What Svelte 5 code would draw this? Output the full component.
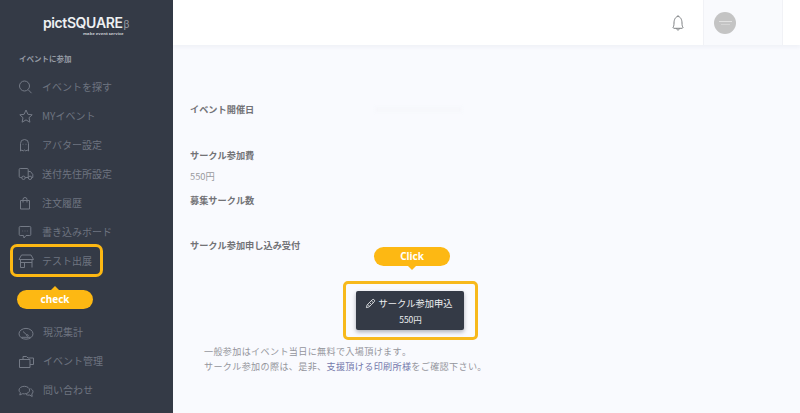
<script>
  const iconPaths = {
    search: '<circle cx="6.500" cy="7" r="5"/><path d="M10.200 10.700 13.500 14.200"/>',
    star: '<path d="M8 2 9.900 6.300 14.200 6.800 11 9.700 11.900 14.200 8 11.900 4.100 14.200 5 9.700 1.800 6.800 6.100 6.300z"/>',
    ghost: '<path d="M2.500 14V6.500a4 4 0 0 1 8 0V14l-1.300-1-1.300 1-1.400-1-1.300 1-1.300-1z"/><path d="M5 6.800v.8M8 6.800v.8"/>',
    truck: '<path d="M3.800 11.500H2.200a1 1 0 0 1-1-1v-7a1 1 0 0 1 1-1h7a1 1 0 0 1 1 1v8H7.200M10.200 5.500h2.300l2.300 3v3h-1"/><circle cx="5.500" cy="11.800" r="1.700"/><circle cx="12" cy="11.800" r="1.700"/>',
    bag: '<path d="M2.500 5.500h9v8.500h-9z"/><path d="M5 7.500v-3a2 2 0 0 1 4 0v3"/>',
    chat: '<path d="M2.200 2.500h9.600a1 1 0 0 1 1 1v7a1 1 0 0 1-1 1H8L6 14l-.5-2.500H2.200a1 1 0 0 1-1-1v-7a1 1 0 0 1 1-1z"/><path d="M4.500 7h.6M6.700 7h.6M8.900 7h.6"/>',
    shop: '<path d="M3.500 2h9.500l2.500 4.500H1zM2.500 6.500v8M14 6.500v8M2.500 9.500H14M6.500 14.500v-5M2.500 14.500h4"/>',
    gauge: '<ellipse cx="8" cy="9.800" rx="7" ry="5.400"/><path d="M3.500 13.300h9M5 7.500 9 11.200"/><circle cx="9.500" cy="11.500" r=".8"/>',
    folder: '<path d="M5 6.500v-3h3.500l1.500 1.500h5.500v6.500h-3.500"/><path d="M1.500 6.500h10.500v8H1.500z"/>',
    talk: '<path d="M6.300 4.300c-2.900 0-5.300 1.700-5.300 3.800 0 1 .5 1.900 1.400 2.600L1.800 13l2.700-1.300c.6.100 1.200.2 1.800.2 2.900 0 5.300-1.700 5.300-3.800s-2.400-3.800-5.300-3.800z"/><path d="M12.500 6.700c1.500.6 2.500 1.700 2.500 3 0 .9-.5 1.700-1.200 2.300l.4 2.500-2.500-1.400c-1.300.2-2.800 0-3.700-.6"/>'
  };
  const topItems = [
    ['search', 'イベントを探す'], ['star', 'MYイベント'], ['ghost', 'アバター設定'],
    ['truck', '送付先住所設定'], ['bag', '注文履歴'], ['chat', '書き込みボード']
  ];
  const bottomItems = [['gauge', '現況集計'], ['folder', 'イベント管理'], ['talk', '問い合わせ']];
</script>

<div class="page">
  <aside class="sidebar">
    <div class="logo">
      <div class="logo-main">pictSQUARE<span class="beta">β</span></div>
      <div class="logo-sub">make event service</div>
    </div>
    <div class="section">イベントに参加</div>
    <nav>
      {#each topItems as [icon, label]}
        <div class="item">
          <svg viewBox="0 0 16 16" class="icon">{@html iconPaths[icon]}</svg>
          <span>{label}</span>
        </div>
      {/each}
      <div class="item marked">
        <svg viewBox="0 0 16 16" class="icon">{@html iconPaths.shop}</svg>
        <span>テスト出展</span>
      </div>
      <div class="check-row"><div class="bubble check">check</div></div>
      {#each bottomItems as [icon, label]}
        <div class="item lower">
          <svg viewBox="0 0 16 16" class="icon">{@html iconPaths[icon]}</svg>
          <span>{label}</span>
        </div>
      {/each}
    </nav>
  </aside>

  <div class="main">
    <header>
      <svg class="bell" viewBox="0 0 16 18">
        <path d="M8 1.200v1.300M3 13.500c.6-1 1-2 1-4.500 0-3.500 1.700-6.500 4-6.500s4 3 4 6.500c0 2.500.4 3.500 1 4.500-.2.500-.5.700-1 .8H4c-.5-.100-.8-.3-1-.8zM6.500 14.500c.2 1 .8 1.500 1.500 1.500s1.300-.5 1.500-1.500"/>
      </svg>
      <div class="user">
        <div class="avatar"><i></i><i class="short"></i></div>
      </div>
    </header>
    <main>
      <div class="first-row">
        <h3>イベント開催日</h3>
        <div class="smudge"></div>
      </div>
      <h3 class="fee">サークル参加費</h3>
      <p class="price">550円</p>
      <h3 class="count">募集サークル数</h3>
      <h3 class="accept">サークル参加申し込み受付</h3>
      <div class="cta">
        <div class="bubble click">Click</div>
        <div class="frame">
          <button>
            <span class="btn-title">
              <svg viewBox="0 0 12 12" class="pen"><path d="M1.500 10.500 2.300 7.500 7.800 2a1.500 1.500 0 0 1 2.200 2.200L4.500 9.700zM7 3l2 2M3 7l2 2M5 5l1.500 1.500"/></svg>
              サークル参加申込
            </span>
            <span class="btn-price">550円</span>
          </button>
        </div>
      </div>
      <div class="note">
        <p>一般参加はイベント当日に無料で入場頂けます。</p>
        <p>サークル参加の際は、是非、<span class="link">支援頂ける印刷所様</span>をご確認下さい。</p>
      </div>
    </main>
  </div>
</div>

<style>
  :global(body) { margin: 0; }
  .page {
    display: flex;
    width: 800px;
    height: 413px;
    overflow: hidden;
    font-family: "Noto Sans CJK JP", "Noto Sans", sans-serif;
    font-kerning: none;
    font-feature-settings: "kern" 0, "palt" 0;
    background: #f9fafe;
  }
  .sidebar {
    flex: 0 0 173px;
    background: #343a46;
    color: #7f8590;
    box-sizing: border-box;
    padding-top: 15px;
  }
  .logo { height: 37px; padding-left: 43px; color: #eef0f2; }
  .logo-main {
    font-family: Inter, sans-serif;
    font-size: 14px;
    line-height: 16px;
    font-weight: 600;
    letter-spacing: -0.4px;
    white-space: nowrap;
  }
  .beta { font-size: 10px; color: #9a9fa8; margin-left: 1px; font-weight: 400; }
  .logo-sub {
    font-family: "Open Sans", sans-serif;
    font-size: 4.200px;
    line-height: 5px;
    margin: -1px 0 0 40px;
    font-weight: 700;
    color: #c8cbd0;
    white-space: nowrap;
  }
  .section {
    font-size: 7.500px;
    line-height: 14px;
    font-weight: 700;
    padding-left: 19px;
    color: #979ca5;
    height: 20px;
  }
  .item {
    height: 29px;
    display: flex;
    align-items: center;
    padding-left: 18px;
    font-size: 10px;
    color: #6e7480;
  }
  .icon {
    width: 16px;
    height: 16px;
    margin-right: 8px;
    fill: none;
    stroke: #747a86;
    stroke-width: 1;
    flex: none;
  }
  .item.lower .icon { margin-right: 9px; }
  .item.marked {
    box-sizing: border-box;
    width: 93px;
    height: 33px;
    margin: -2px 0 0 10px;
    padding-left: 5px;
    border: 3px solid #fdb813;
    border-radius: 7px;
  }
  .check-row { height: 40px; padding: 13px 0 0 17px; box-sizing: border-box; }
  .bubble {
    position: relative;
    background: #fdb813;
    color: #fff;
    font-family: "Noto Sans", sans-serif;
    font-weight: 700;
    border-radius: 10px;
    text-align: center;
    font-size: 10px;
    width: 76px;
    height: 19px;
    line-height: 19px;
  }
  .bubble::after {
    content: "";
    position: absolute;
    left: 50%;
    margin-left: -4px;
    border: 4px solid transparent;
  }
  .check::after { bottom: 100%; border-bottom-color: #fdb813; border-top-width: 0; }
  .click::after { top: 100%; border-top-color: #fdb813; border-bottom-width: 0; }
  .main { flex: 1; min-width: 0; display: flex; flex-direction: column; }
  header {
    flex: 0 0 45px;
    background: #fff;
    display: flex;
    align-items: stretch;
    justify-content: flex-end;
    box-shadow: 0 2px 4px rgba(40, 50, 90, 0.05);
    position: relative;
  }
  .bell {
    width: 16px;
    height: 18px;
    align-self: center;
    margin: 1px 17px 0 0;
    fill: none;
    stroke: #7d8083;
    stroke-width: 1;
  }
  .user {
    width: 68px;
    margin-right: 17px;
    background: #f9fafd;
    border-left: 1px solid #f1f2f6;
    border-right: 1px solid #f1f2f6;
    display: flex;
    align-items: center;
    padding-left: 10px;
  }
  .avatar {
    width: 22px;
    height: 22px;
    border-radius: 50%;
    background: #c4c4c4;
    display: flex;
    flex-direction: column;
    align-items: center;
    justify-content: center;
    gap: 2px;
  }
  .avatar i { display: block; width: 13px; height: 1px; background: #e2e2e2; }
  .avatar i.short { width: 9px; background: #d4d4d4; }
  main { padding: 0 0 0 17px; flex: 1; min-height: 0; overflow: hidden; }
  h3 {
    margin: 0;
    font-size: 9.200px;
    line-height: 14px;
    font-weight: 700;
    color: #727276;
  }
  .first-row { display: flex; align-items: center; margin-top: 57px; }
  .smudge {
    width: 87px;
    height: 5px;
    margin-left: 121px;
    background: #f6f7fb;
    filter: blur(1.500px);
  }
  h3.fee { margin-top: 32px; }
  .price { margin: 7px 0 0; font-size: 9.300px; line-height: 14px; color: #9a9a9f; }
  h3.count { margin-top: 10px; }
  h3.accept { margin-top: 31px; }
  .cta { display: flex; flex-direction: column; width: 135px; margin: -5px 0 0 153px; }
  .click { margin-left: 31px; }
  .frame {
    box-sizing: border-box;
    width: 135px;
    height: 59px;
    margin-top: 15px;
    padding-right: 2px;
    border: 3px solid #f7b91c;
    border-radius: 5px;
    display: flex;
    align-items: center;
    justify-content: center;
  }
  button {
    flex: none;
    width: 108px;
    height: 39px;
    border: 0;
    padding: 0 2px 0 0;
    border-radius: 2px;
    background: #343a46;
    box-shadow: 0 2px 4px rgba(30, 35, 50, 0.35);
    color: #eceef0;
    font-family: inherit;
    font-kerning: none;
    font-feature-settings: "kern" 0, "palt" 0;
    display: flex;
    flex-direction: column;
    align-items: center;
    justify-content: center;
  }
  .btn-title { font-size: 9.250px; line-height: 17px; display: flex; align-items: center; gap: 3px; }
  .btn-price { font-size: 8.500px; line-height: 14px; margin-left: 4px; }
  .pen { width: 11px; height: 11px; fill: none; stroke: #eceef0; stroke-width: 0.9; }
  .note { margin: 4px 0 0 14px; font-size: 9.100px; line-height: 15px; letter-spacing: 0.33px; color: #94959c; }
  .note p { margin: 0; }
  .link { color: #7377aa; }
</style>
